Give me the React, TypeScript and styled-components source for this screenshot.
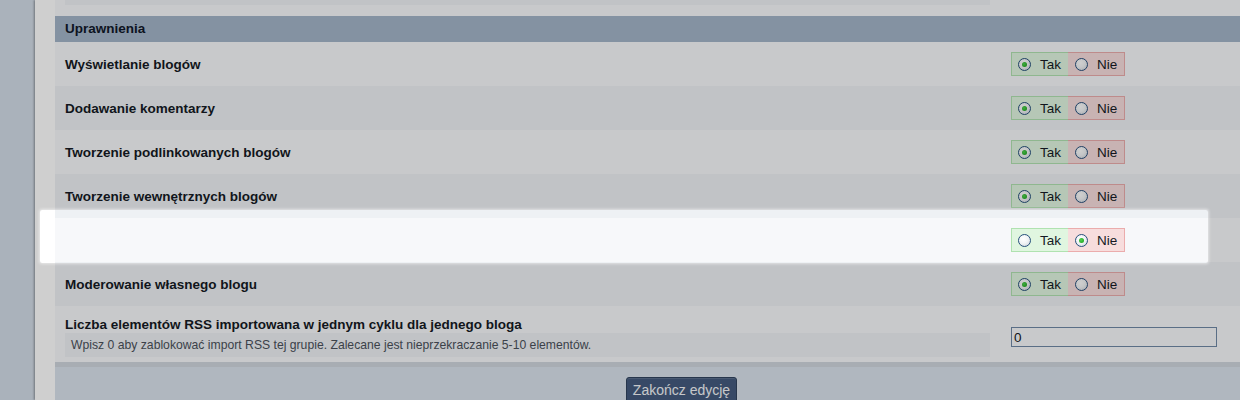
import React from "react";
import styled, { createGlobalStyle } from "styled-components";

const Global = createGlobalStyle`
  html, body { margin: 0; padding: 0; }
  body {
    background: #d2dce7;
    overflow: hidden;
    font-family: "Liberation Sans", Arial, sans-serif;
    color: #151a24;
  }
`;

const Page = styled.div`
  position: relative;
  display: flex;
  padding-left: 35px;
  height: 400px;
  overflow: hidden;
`;

const Panel = styled.div`
  background: #ffffff;
  box-shadow: -1px 0 2px rgba(0, 0, 0, 0.35);
  padding-left: 20px;
  width: 1253px;
  flex: none;
`;

const TailRow = styled.div`
  background: #f7f8fa;
  padding: 0 0 11px 10px;
`;

const DescBox = styled.div<{ $h: number }>`
  width: 925px;
  height: ${(p) => p.$h}px;
  background: #eef1f4;
  box-sizing: border-box;
  font-size: 12.2px;
  color: #4a505a;
  padding-left: 6px;
  display: flex;
  align-items: center;
`;

const Header = styled.div`
  height: 26px;
  line-height: 26px;
  background: #a3b4c8;
  font-weight: bold;
  font-size: 13.5px;
  padding-left: 10px;
  color: #101828;
`;

const Row = styled.div<{ $alt: boolean }>`
  display: grid;
  grid-template-columns: 956px 1fr;
  align-items: center;
  min-height: 44px;
  background: ${(p) => (p.$alt ? "#eef1f4" : "#f7f8fa")};
`;

const TallRow = styled(Row)`
  align-items: start;
  min-height: 56px;
`;

const Label = styled.div`
  padding-left: 10px;
  font-weight: bold;
  font-size: 13.5px;
  line-height: 16px;
  color: #151a24;
  padding-top: 1px;
`;

const LabelBlock = styled.div`
  padding-top: 10px;
  display: flex;
  flex-direction: column;
  & > ${DescBox} {
    margin-left: 10px;
  }
`;

const Toggle = styled.div`
  display: flex;
  height: 24px;
`;

const Half = styled.label<{ $yes: boolean }>`
  box-sizing: border-box;
  width: 57px;
  height: 24px;
  display: flex;
  align-items: center;
  gap: 9px;
  padding-left: ${(p) => (p.$yes ? 6 : 7)}px;
  font-size: 13.5px;
  color: #151a24;
  background: ${(p) => (p.$yes ? "#e0f6e0" : "#f7dddd")};
  border: 1px solid ${(p) => (p.$yes ? "#b0e2b0" : "#ebacac")};
  ${(p) => (p.$yes ? "border-right: none;" : "border-left: none;")}
`;

const Radio = styled.span<{ $on: boolean }>`
  box-sizing: border-box;
  width: 13px;
  height: 13px;
  border-radius: 50%;
  border: 1px solid #27507c;
  background: radial-gradient(circle at 40% 35%, #ffffff 0%, #f2f4f6 45%, #c9d0d8 100%);
  display: flex;
  align-items: center;
  justify-content: center;
  flex: none;
  &::after {
    content: "";
    width: 5px;
    height: 5px;
    border-radius: 50%;
    background: radial-gradient(circle at 40% 40%, #4fd34f, #179a17);
    display: ${(p) => (p.$on ? "block" : "none")};
  }
`;

const Input = styled.input`
  box-sizing: border-box;
  width: 206px;
  height: 20px;
  margin-top: 21px;
  border: 1px solid #6f88a5;
  background: #f7f8fa;
  font-family: "Liberation Sans", Arial, sans-serif;
  font-size: 13.5px;
  color: #151a24;
  padding: 0 2px;
  outline: none;
`;

const Footer = styled.div`
  border-top: 5px solid #cfd6dd;
  background: #d9e2ec;
  padding-top: 10px;
  min-height: 40px;
  display: flex;
  justify-content: center;
`;

const Button = styled.button`
  height: 26px;
  padding: 0 6px;
  background: #445b7e;
  border: 1px solid #30435e;
  border-radius: 3px;
  color: #f4f6f9;
  font-family: "Liberation Sans", Arial, sans-serif;
  font-size: 14px;
  line-height: 24px;
  box-shadow: inset 0 1px 0 rgba(255, 255, 255, 0.12);
`;

const Spotlight = styled.div`
  position: absolute;
  left: 40px;
  top: 210px;
  width: 1168px;
  height: 53px;
  border-radius: 2px;
  pointer-events: none;
  box-shadow: 0 0 3px 1px rgba(255, 255, 255, 0.55), 0 0 0 3000px rgba(0, 0, 0, 0.19);
`;

type Perm = { label: string; value: boolean };

const perms: Perm[] = [
  { label: "Wyświetlanie blogów", value: true },
  { label: "Dodawanie komentarzy", value: true },
  { label: "Tworzenie podlinkowanych blogów", value: true },
  { label: "Tworzenie wewnętrznych blogów", value: true },
  { label: "", value: false },
  { label: "Moderowanie własnego blogu", value: true },
];

function YesNo({ value }: { value: boolean }) {
  return (
    <Toggle>
      <Half $yes>
        <Radio $on={value} />
        Tak
      </Half>
      <Half $yes={false}>
        <Radio $on={!value} />
        Nie
      </Half>
    </Toggle>
  );
}

export default function App() {
  return (
    <>
      <Global />
      <Page>
        <Panel>
          <TailRow>
            <DescBox $h={5} />
          </TailRow>
          <Header>Uprawnienia</Header>
          {perms.map((p, i) => (
            <Row key={i} $alt={i % 2 === 1}>
              <Label>{p.label}</Label>
              <YesNo value={p.value} />
            </Row>
          ))}
          <TallRow $alt={false}>
            <LabelBlock>
              <Label>Liczba elementów RSS importowana w jednym cyklu dla jednego bloga</Label>
              <DescBox $h={24}>
                Wpisz 0 aby zablokować import RSS tej grupie. Zalecane jest nieprzekraczanie 5-10 elementów.
              </DescBox>
            </LabelBlock>
            <Input defaultValue="0" />
          </TallRow>
          <Footer>
            <Button>Zakończ edycję</Button>
          </Footer>
        </Panel>
        <Spotlight />
      </Page>
    </>
  );
}
